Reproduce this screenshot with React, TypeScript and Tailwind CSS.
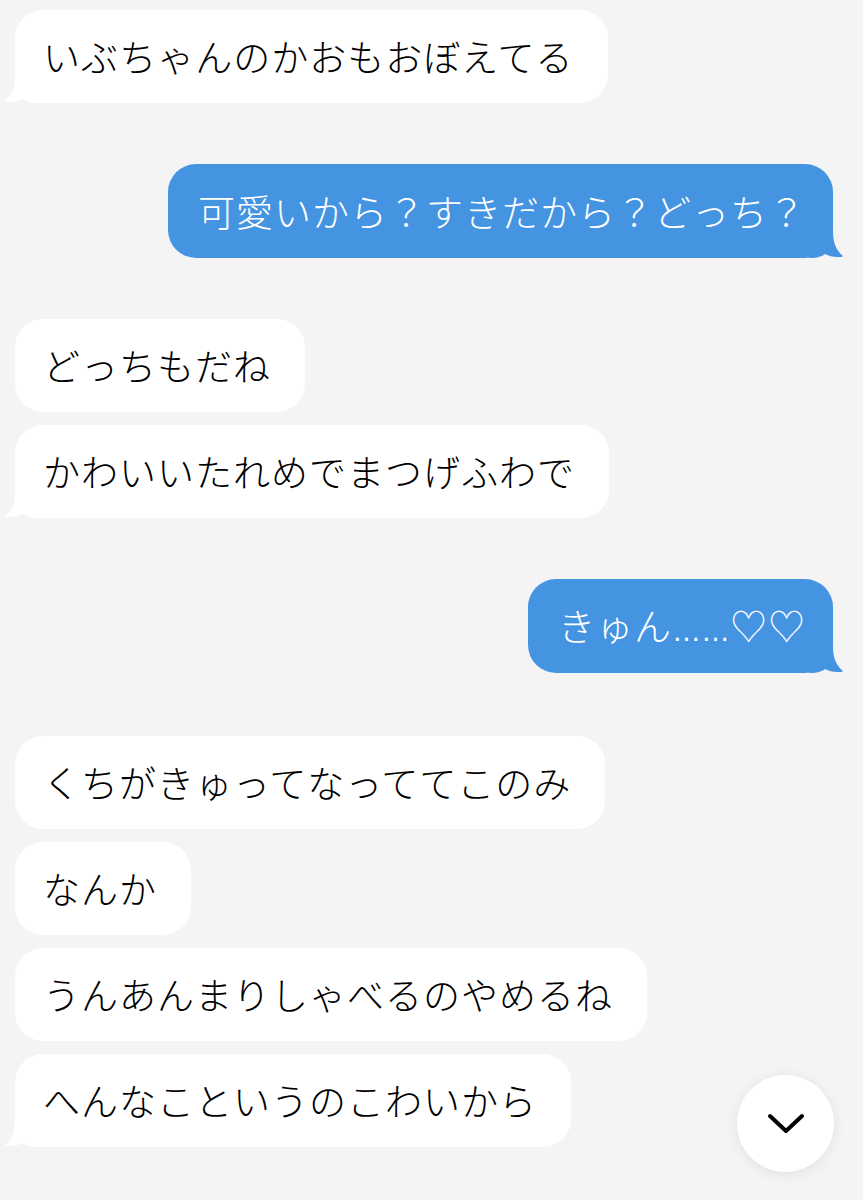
import { ReactNode } from "react";

type Side = "left" | "right";

interface Msg {
  side: Side;
  texts: ReactNode[];
}

const messages: Msg[] = [
  { side: "left", texts: ["いぶちゃんのかおもおぼえてる"] },
  { side: "right", texts: ["可愛いから？すきだから？どっち？"] },
  { side: "left", texts: ["どっちもだね", "かわいいたれめでまつげふわで"] },
  {
    side: "right",
    texts: [
      <>
        きゅん
        <span
          className="tracking-[0px] text-[29px]"
          style={{ fontFamily: '"Liberation Sans", sans-serif' }}
        >
          ……
        </span>
        ♡♡
      </>,
    ],
  },
  {
    side: "left",
    texts: [
      "くちがきゅってなっててこのみ",
      "なんか",
      "うんあんまりしゃべるのやめるね",
      "へんなこというのこわいから",
    ],
  },
];

const Tail = ({ side }: { side: Side }) => {
  if (side === "left") {
    return (
      <svg
        className="absolute left-[-10px] bottom-0"
        width="34"
        height="26"
        viewBox="0 0 34 26"
      >
        <path
          d="M10 0 C10 12 6 19 0.5 23.5 C0 24.5 1 25 3 25 C9 25.5 14 24 18 22 C21 24.5 26 26 34 26 L34 0 Z"
          fill="#ffffff"
        />
      </svg>
    );
  }
  return (
    <svg
      className="absolute right-[-10px] bottom-0"
      width="34"
      height="26"
      viewBox="0 0 34 26"
    >
      <path
        d="M24 0 C24 12 28 19 33.5 23.5 C34 24.5 33 25 31 25 C25 25.5 20 24 16 22 C13 24.5 8 26 0 26 L0 0 Z"
        fill="#4594e2"
      />
    </svg>
  );
};

const Bubble = ({
  side,
  children,
  tail,
}: {
  side: Side;
  children: ReactNode;
  tail: boolean;
}) => {
  const isLeft = side === "left";
  return (
    <div
      className={
        isLeft
          ? "relative h-[93px] flex items-center pl-[28px] pr-[34px] rounded-[28px] bg-white text-black self-start"
          : "relative h-[94px] flex items-center pl-[30px] pr-[27px] rounded-[28px] bg-[#4594e2] text-white self-end"
      }
    >
      {tail && <Tail side={side} />}
      <span className="relative text-[37px] font-light tracking-[1px] leading-none whitespace-nowrap">
        {children}
      </span>
    </div>
  );
};

export default function App() {
  return (
    <div
      className="relative min-h-[1200px] w-full bg-[#f4f4f4] overflow-hidden"
      style={{ fontFamily: '"Noto Sans CJK JP", "Noto Sans", sans-serif' }}
    >
      <div className="flex flex-col gap-[61px] pt-[10px] pl-[15px] pr-[30px]">
        {messages.map((m, i) => (
          <div
            key={i}
            className={i === 4 ? "flex flex-col gap-[13px] mt-[2px]" : "flex flex-col gap-[13px]"}
          >
            {m.texts.map((t, j) => (
              <Bubble key={j} side={m.side} tail={j === m.texts.length - 1}>
                {t}
              </Bubble>
            ))}
          </div>
        ))}
      </div>

      <button className="absolute left-[737px] top-[1075px] w-[97px] h-[97px] rounded-full bg-white shadow-[0_2px_14px_rgba(0,0,0,0.08)] flex items-center justify-center">
        <svg width="40" height="24" viewBox="0 0 40 24">
          <path
            d="M4 4 L20 19 L36 4"
            fill="none"
            stroke="#000"
            strokeWidth="4"
            strokeLinecap="round"
            strokeLinejoin="round"
          />
        </svg>
      </button>
    </div>
  );
}
